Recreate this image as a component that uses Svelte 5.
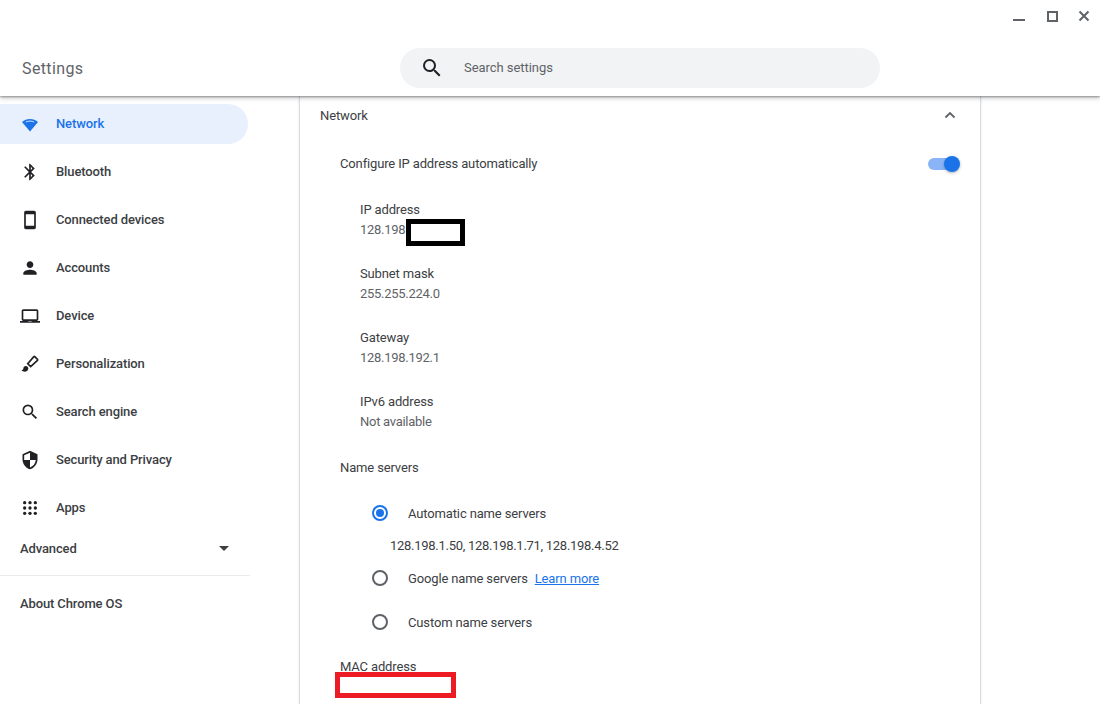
<script>
  const search = 'M15.500 14h-.79l-.28-.27A6.470 6.470 0 0 0 16 9.500 6.500 6.500 0 1 0 9.500 16c1.610 0 3.090-.59 4.230-1.570l.27.28v.79l5 4.990L20.490 19l-4.990-5zm-6 0C7.010 14 5 11.990 5 9.500S7.010 5 9.500 5 14 7.010 14 9.500 11.990 14 9.500 14z';
  const nav = [
    { label: 'Network', icon: 'wifi', active: true },
    { label: 'Bluetooth', icon: 'M17.710 7.710 12 2h-1v7.590L6.410 5 5 6.410 10.590 12 5 17.590 6.410 19 11 14.410V22h1l5.710-5.710-4.300-4.290 4.300-4.290zM13 5.830l1.880 1.880L13 9.590V5.830zm1.880 10.460L13 18.170v-3.760l1.880 1.880z' },
    { label: 'Connected devices', icon: 'M17 1H7c-1.100 0-2 .9-2 2v18c0 1.100.9 2 2 2h10c1.100 0 2-.9 2-2V3c0-1.100-.9-2-2-2zm0 18H7V5h10v14z' },
    { label: 'Accounts', icon: 'M12 12c2.210 0 4-1.790 4-4s-1.790-4-4-4-4 1.790-4 4 1.790 4 4 4zm0 2c-2.670 0-8 1.340-8 4v2h16v-2c0-2.660-5.330-4-8-4z' },
    { label: 'Device', icon: 'M20 18c1.100 0 2-.9 2-2V6c0-1.100-.9-2-2-2H4c-1.100 0-2 .9-2 2v10c0 1.100.9 2 2 2H0v2h24v-2h-4zM4 6h16v10H4V6zm10 12.500h-4V18h4v.5z' },
    { label: 'Personalization', icon: 'brush' },
    { label: 'Search engine', icon: search },
    { label: 'Security and Privacy', icon: 'M12 1 3 5v6c0 5.550 3.840 10.740 9 12 5.160-1.260 9-6.450 9-12V5l-9-4zm0 10.990h7c-.53 4.120-3.280 7.790-7 8.940V12H5V6.300l7-3.110v8.800z' },
    { label: 'Apps', icon: 'dots' }
  ];
  const details = [
    ['IP address', '128.198', true],
    ['Subnet mask', '255.255.224.0', false],
    ['Gateway', '128.198.192.1', false],
    ['IPv6 address', 'Not available', false]
  ];
  const dots = [5.600, 12, 18.400];
</script>

<div class="window">
  <header class="top">
    <div class="controls">
      <svg class="ctl" viewBox="0 0 16 16"><rect x="1" y="11" width="12" height="2" fill="#5f6368"/></svg>
      <svg class="ctl" viewBox="0 0 16 16"><rect x="4" y="4" width="9" height="9" fill="none" stroke="#5f6368" stroke-width="2"/></svg>
      <svg class="ctl" viewBox="0 0 16 16"><path d="M3.500 3.500l9 9M12.500 3.500l-9 9" fill="none" stroke="#5f6368" stroke-width="2"/></svg>
    </div>
    <div class="bar">
      <h1>Settings</h1>
      <div class="search">
        <svg class="search-icon" viewBox="0 0 24 24"><path d={search} fill="#202124"/></svg>
        <span>Search settings</span>
      </div>
    </div>
  </header>

  <div class="main">
    <nav class="side">
      {#each nav as item}
        <div class="item" class:active={item.active}>
          <svg class="icon" viewBox="0 0 24 24">
            {#if item.icon === 'dots'}
              {#each dots as y}{#each dots as x}<circle cx={x} cy={y} r="2" fill="#202124"/>{/each}{/each}
            {:else if item.icon === 'wifi'}
              <path d="M12 21 2.400 9.600C5 7.400 8.300 6 12 6s7 1.400 9.600 3.600Z" fill="#1a73e8"/>
              <path d="M7 9.600C8.500 8.900 10.200 8.500 12 8.500s3.500.4 5 1.100" fill="none" stroke="#cfe0fb" stroke-width="1.200"/>
            {:else if item.icon === 'brush'}
              <path d="M7 14.500c-1.700 0-3 1.300-3 3 0 1.300-1.200 2-2.400 2 1 1.100 2.600 1.700 4.100 1.700 2.300 0 4.300-1.600 4.300-3.900 0-1.600-1.300-2.800-3-2.800z" fill="#202124"/>
              <path d="M17.700 3.200 21 6.500a.8.800 0 0 1 0 1.100l-8.200 7.600-3.500-3.500 7.300-8.500a.8.800 0 0 1 1.100 0z" fill="none" stroke="#202124" stroke-width="2"/>
            {:else}
              <path d={item.icon} fill="#202124"/>
            {/if}
          </svg>
          <span>{item.label}</span>
        </div>
      {/each}
      <div class="advanced">
        <span>Advanced</span>
        <svg class="caret" viewBox="0 0 10 5"><path d="M0 0h10L5 5z" fill="#3c4043"/></svg>
      </div>
      <div class="rule"></div>
      <div class="about">About Chrome OS</div>
    </nav>

    <section class="card">
      <div class="head">
        <span>Network</span>
        <svg class="chev" viewBox="0 0 12 8"><path d="M1.500 6.500 6 2l4.500 4.500" fill="none" stroke="#5f6368" stroke-width="1.800"/></svg>
      </div>
      <div class="auto">
        <span class="up">Configure IP address automatically</span>
        <div class="toggle"><div class="track"></div><div class="knob"></div></div>
      </div>
      <div class="details">
        {#each details as [k, v, redacted]}
          <div class="detail">
            <div class="k">{k}</div>
            <div class="v">{v}{#if redacted}<span class="mask-black"></span>{/if}</div>
          </div>
        {/each}
      </div>
      <div class="ns-title">Name servers</div>
      <div class="radio first">
        <span class="dot on"></span><span>Automatic name servers</span>
      </div>
      <div class="ns-list">128.198.1.50, 128.198.1.71, 128.198.4.52</div>
      <div class="radio google">
        <span class="dot"></span><span>Google name servers</span><a href="#top">Learn more</a>
      </div>
      <div class="radio custom">
        <span class="dot"></span><span>Custom name servers</span>
      </div>
      <div class="mac">MAC address</div>
      <div class="mask-red"></div>
    </section>
  </div>
</div>

<style>
  :global(body) { margin: 0; background: #fff; }
  .window {
    width: 1100px; height: 704px; overflow: hidden; position: relative;
    font-family: Roboto, "Liberation Sans", sans-serif; font-size: 13px; color: #202124; background: #fff;
  }
  .top {
    height: 96px; box-sizing: border-box; background: #fff; position: relative; z-index: 2;
    box-shadow: 0 1px 2px rgba(60,64,67,.5), 0 2px 5px rgba(60,64,67,.25);
    display: flex; flex-direction: column;
  }
  .controls { display: flex; justify-content: flex-end; gap: 16px; padding: 8px 8px 0 0; height: 40px; box-sizing: border-box; }
  .ctl { width: 16px; height: 16px; }
  .bar { display: flex; align-items: center; height: 40px; margin-top: 8px; }
  h1 { margin: 0; width: 400px; box-sizing: border-box; padding-left: 22px; font-size: 16px; font-weight: 400; letter-spacing: .38px; color: #5f6368; }
  .search { width: 480px; height: 40px; border-radius: 20px; background: #f1f3f4; display: flex; align-items: center; color: #5f6368; letter-spacing: -.05px; }
  .search span { margin-top: -2px; }
  .search-icon { width: 24px; height: 24px; margin-left: 20px; margin-right: 20px; }
  .main { display: flex; height: 608px; }
  .side { width: 299px; flex: none; padding-top: 8px; box-sizing: border-box; letter-spacing: -.12px; }
  .item { height: 40px; width: 248px; margin-bottom: 8px; display: flex; align-items: center; font-weight: 500; color: #3c4043; border-radius: 0 20px 20px 0; box-sizing: border-box; padding-left: 20px; }
  .item span { margin-top: -2px; }
  .item.active { background: #e8f0fe; color: #1a73e8; }
  .icon { width: 20px; height: 20px; margin-right: 16px; flex: none; }
  .advanced { width: 229px; height: 24px; padding-left: 20px; margin-top: 7px; box-sizing: border-box; display: flex; justify-content: space-between; align-items: center; font-weight: 500; color: #3c4043; }
  .caret { width: 10px; height: 5px; }
  .rule { width: 250px; height: 1px; background: #e8eaed; margin-top: 15px; }
  .about { padding-left: 20px; margin-top: 19px; line-height: 18px; font-weight: 500; color: #3c4043; }
  .card { width: 682px; height: 100%; box-sizing: border-box; border-left: 1px solid #dadce0; border-right: 1px solid #dadce0; padding: 0 20px; position: relative; box-shadow: 0 0 2px rgba(60,64,67,.15); letter-spacing: -.14px; }
  .head { height: 38px; display: flex; justify-content: space-between; align-items: center; color: #3c4043; padding-right: 4px; }
  .chev { width: 12px; height: 8px; }
  .auto { margin-top: 10px; height: 40px; padding-left: 20px; display: flex; justify-content: space-between; align-items: center; color: #3c4043; }
  .up { margin-top: -2px; }
  .toggle { position: relative; width: 32px; height: 18px; }
  .track { position: absolute; left: 0; top: 3px; width: 30px; height: 12px; border-radius: 6px; background: #8ab4f8; }
  .knob { position: absolute; right: 0; top: 1px; width: 16px; height: 16px; border-radius: 50%; background: #1a73e8; box-shadow: 0 1px 3px rgba(60,64,67,.4); }
  .details { padding-left: 40px; margin-top: 16px; }
  .detail { height: 64px; }
  .k { line-height: 20px; color: #3c4043; }
  .v { line-height: 20px; color: #5f6368; position: relative; letter-spacing: -.28px; }
  .mask-black { position: absolute; left: 46px; top: -1px; width: 49px; height: 17px; border: 5px solid #000; background: #fff; }
  .ns-title { padding-left: 20px; margin-top: 2px; line-height: 20px; color: #3c4043; }
  .radio { display: flex; align-items: center; height: 24px; padding-left: 52px; color: #3c4043; }
  .radio.first { margin-top: 23px; }
  .radio.google { margin-top: 8px; }
  .radio.custom { margin-top: 20px; }
  .dot { width: 12px; height: 12px; border: 2px solid #5f6368; border-radius: 50%; margin-right: 20px; flex: none; position: relative; }
  .dot.on { border-color: #1a73e8; }
  .dot.on::after { content: ''; position: absolute; left: 2px; top: 2px; width: 8px; height: 8px; border-radius: 50%; background: #1a73e8; }
  a { color: #1a73e8; margin-left: 7px; }
  .ns-list { padding-left: 70px; margin-top: 9px; height: 24px; line-height: 24px; color: #3c4043; letter-spacing: -.28px; }
  .mac { padding-left: 20px; margin-top: 23px; line-height: 20px; color: #3c4043; }
  .mask-red { position: absolute; left: 35px; top: 576px; width: 111px; height: 16px; border: 5px solid #ed1c24; background: #fff; }
</style>
